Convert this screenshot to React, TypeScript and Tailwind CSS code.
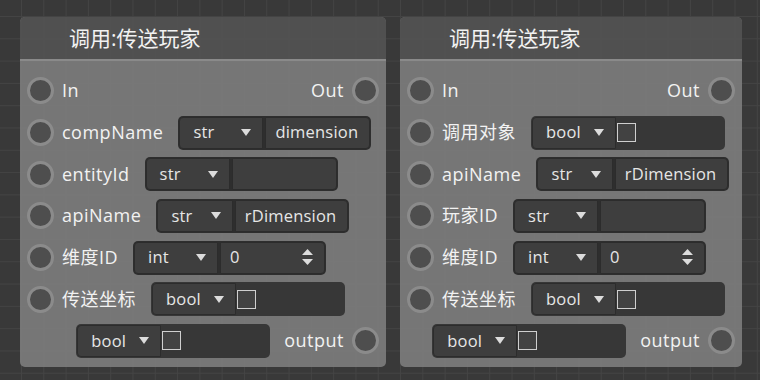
import React from 'react'

type Field =
    | { kind: 'text'; value: string }
    | { kind: 'int'; value: string }
    | { kind: 'bool' }

type Row = { label: string; field: Field }

type NodeDef = { title: string; width: string; rows: Row[] }

const nodes: NodeDef[] = [
    {
        title: '调用:传送玩家',
        width: 'w-[366px]',
        rows: [
            { label: 'compName', field: { kind: 'text', value: 'dimension' } },
            { label: 'entityId', field: { kind: 'text', value: '' } },
            { label: 'apiName', field: { kind: 'text', value: 'rDimension' } },
            { label: '维度ID', field: { kind: 'int', value: '0' } },
            { label: '传送坐标', field: { kind: 'bool' } },
        ],
    },
    {
        title: '调用:传送玩家',
        width: 'w-[342px]',
        rows: [
            { label: '调用对象', field: { kind: 'bool' } },
            { label: 'apiName', field: { kind: 'text', value: 'rDimension' } },
            { label: '玩家ID', field: { kind: 'text', value: '' } },
            { label: '维度ID', field: { kind: 'int', value: '0' } },
            { label: '传送坐标', field: { kind: 'bool' } },
        ],
    },
]

function Port() {
    return <div className="w-[27px] h-[27px] shrink-0 rounded-full border-[3px] border-[#8b8b8b] bg-[#4e4e4e]" />
}

function Arrow() {
    return (
        <svg width="10" height="7" viewBox="0 0 10 7" className="shrink-0">
            <path d="M0 0 H10 L5 7 Z" fill="#dcdcdc" />
        </svg>
    )
}

function Spinner() {
    return (
        <svg width="11" height="17" viewBox="0 0 11 17" className="shrink-0">
            <path d="M5.5 0 L11 6 H0 Z" fill="#dcdcdc" />
            <path d="M0 10 H11 L5.5 16 Z" fill="#dcdcdc" />
        </svg>
    )
}

function Dropdown({ type }: { type: string }) {
    return (
        <div className="w-[84px] h-full flex items-center justify-between pl-[13px] pr-[11px] bg-[#3e3e3e] border border-[#2c2c2c] rounded-l-[4px]">
            <span>{type}</span>
            <Arrow />
        </div>
    )
}

function Widget({ field }: { field: Field }) {
    if (field.kind === 'bool') {
        return (
            <div className="w-[194px] h-[34px] flex items-center bg-[#373737] rounded-[5px] p-[1px]">
                <Dropdown type="bool" />
                <div className="ml-[1px] w-[19px] h-[19px] border-[1.5px] border-[#cfcfcf] bg-[#424242]" />
            </div>
        )
    }
    return (
        <div className="w-[193px] h-[34px] flex bg-[#2e2e2e] rounded-[5px] p-[1px] gap-[2px]">
            <Dropdown type={field.kind === 'int' ? 'int' : 'str'} />
            <div className="flex-1 h-full flex items-center justify-between pl-[9px] pr-[11px] bg-[#3e3e3e] border border-[#2c2c2c] rounded-r-[4px]">
                <span>{field.value}</span>
                {field.kind === 'int' && <Spinner />}
            </div>
        </div>
    )
}

function Node({ node }: { node: NodeDef }) {
    return (
        <div className={`${node.width} shrink-0 rounded-[5px] overflow-hidden bg-[#7d7d7d]/90`}>
            <div className="h-[44px] flex items-center pl-[49px] pt-[2px] bg-[#4c4c4c]/90 border-b-2 border-[#8a8a8a] text-[21px] text-[#f2f2f2]">
                {node.title}
            </div>
            <div className="pt-[9px] pb-[5px] px-[7px] text-[18px] tracking-[0.5px] text-[#f2f2f2]">
                <div className="h-[41.7px] flex items-center">
                    <Port />
                    <span className="ml-[8px]">In</span>
                    <span className="ml-auto mr-[8px]">Out</span>
                    <Port />
                </div>
                {node.rows.map((row) => (
                    <div key={row.label} className="h-[41.7px] flex items-center">
                        <Port />
                        <span className="ml-[8px] mr-[15px]">{row.label}</span>
                        <div className="text-[16.5px] tracking-[0.2px] text-[#e6e6e6]">
                            <Widget field={row.field} />
                        </div>
                    </div>
                ))}
                <div className="h-[41.7px] flex items-center justify-end">
                    <div className="text-[16.5px] tracking-[0.2px] text-[#e6e6e6]">
                        <Widget field={{ kind: 'bool' }} />
                    </div>
                    <span className="ml-[14px] mr-[8px]">output</span>
                    <Port />
                </div>
            </div>
        </div>
    )
}

export default function App() {
    return (
        <div className="w-[760px] h-[380px] overflow-hidden flex items-start gap-[14px] pl-[20px] pt-[17px] bg-[#393939] bg-[linear-gradient(to_right,#444444_1px,transparent_1px),linear-gradient(to_bottom,#444444_1px,transparent_1px)] bg-[size:22.3px_22.3px] bg-[position:21px_16px] font-['Open_Sans','Noto_Sans_CJK_SC',sans-serif]">
            {nodes.map((n, i) => (
                <Node key={i} node={n} />
            ))}
        </div>
    )
}
